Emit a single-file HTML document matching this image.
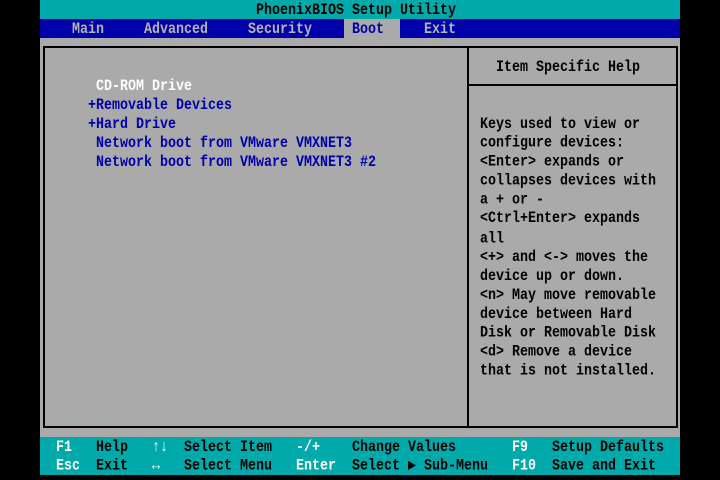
<!DOCTYPE html>
<html><head><meta charset="utf-8"><style>
body{margin:0;width:720px;height:480px;background:#000;overflow:hidden;position:relative;font-family:"Liberation Mono","DejaVu Sans Mono",monospace;font-size:13.33px;font-weight:bold}
div{position:absolute}
.t{line-height:16px;white-space:pre;transform:scaleY(1.18);transform-origin:0 0;margin-top:2px}
.m{line-height:16.1px}
.l{background:#000}
</style></head><body>
<div style="left:40px;top:0;width:640px;height:19px;background:#00aaaa"></div>
<div style="left:40px;top:19px;width:640px;height:19px;background:#0000aa"></div>
<div style="left:40px;top:38px;width:640px;height:399px;background:#aaaaaa"></div>
<div style="left:40px;top:437px;width:640px;height:38px;background:#00aaaa"></div>
<div style="left:344px;top:19px;width:56px;height:19px;background:#aaaaaa"></div>
<div class="l" style="left:43px;top:46px;width:635px;height:2px"></div>
<div class="l" style="left:43px;top:426px;width:635px;height:2px"></div>
<div class="l" style="left:43px;top:46px;width:2px;height:382px"></div>
<div class="l" style="left:676px;top:46px;width:2px;height:382px"></div>
<div class="l" style="left:467px;top:46px;width:2px;height:382px"></div>
<div class="l" style="left:467px;top:84px;width:211px;height:2px"></div>

<div class="t" style="left:256px;top:0;color:#000">PhoenixBIOS Setup Utility</div>
<div class="t" style="left:72px;top:19px;color:#b4b4b4">Main</div>
<div class="t" style="left:144px;top:19px;color:#b4b4b4">Advanced</div>
<div class="t" style="left:248px;top:19px;color:#b4b4b4">Security</div>
<div class="t" style="left:352px;top:19px;color:#0000aa">Boot</div>
<div class="t" style="left:424px;top:19px;color:#b4b4b4">Exit</div>

<div class="t" style="left:96px;top:76px;color:#fff">CD-ROM Drive</div>
<div class="t" style="left:88px;top:95px;color:#0000aa">+Removable Devices</div>
<div class="t" style="left:88px;top:114px;color:#0000aa">+Hard Drive</div>
<div class="t" style="left:96px;top:133px;color:#0000aa">Network boot from VMware VMXNET3</div>
<div class="t" style="left:96px;top:152px;color:#0000aa">Network boot from VMware VMXNET3 #2</div>

<div class="t" style="left:496px;top:57px;color:#000">Item Specific Help</div>
<div class="t m" style="left:480px;top:114px;color:#000">Keys used to view or
configure devices:
&lt;Enter&gt; expands or
collapses devices with
a + or -
&lt;Ctrl+Enter&gt; expands
all
&lt;+&gt; and &lt;-&gt; moves the
device up or down.
&lt;n&gt; May move removable
device between Hard
Disk or Removable Disk
&lt;d&gt; Remove a device
that is not installed.</div>

<div class="t m" style="left:56px;top:437px;color:#fff">F1
Esc</div>
<div class="t m" style="left:96px;top:437px;color:#000">Help
Exit</div>
<div class="t m" style="left:152px;top:437px;color:#fff">↑↓
↔</div>
<div class="t m" style="left:184px;top:437px;color:#000">Select Item
Select Menu</div>
<div class="t m" style="left:296px;top:437px;color:#fff">-/+
Enter</div>
<div class="t m" style="left:352px;top:437px;color:#000">Change Values
Select ▶ Sub-Menu</div>
<div class="t m" style="left:512px;top:437px;color:#fff">F9
F10</div>
<div class="t m" style="left:552px;top:437px;color:#000">Setup Defaults
Save and Exit</div>
</body></html>
